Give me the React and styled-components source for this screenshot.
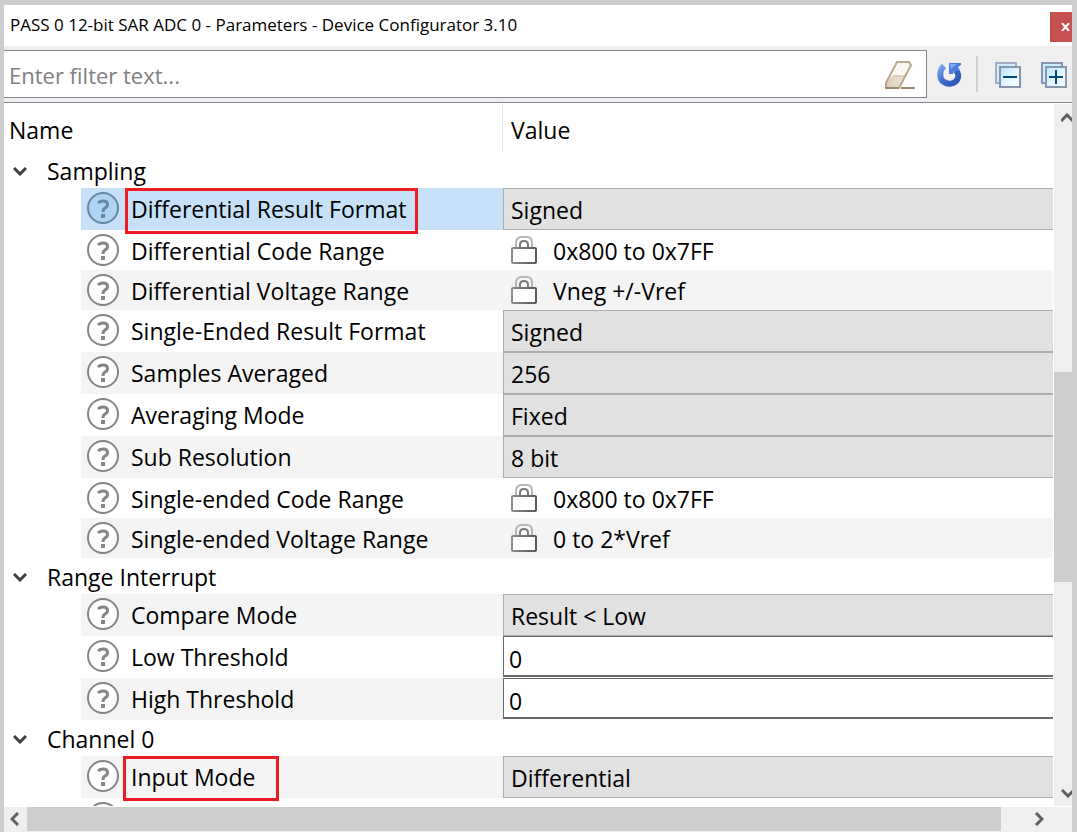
import React, { useState } from "react";
import styled, { createGlobalStyle, css } from "styled-components";

const GlobalStyle = createGlobalStyle`
  * { box-sizing: border-box; }
  body {
    margin: 0;
    background: #cdcdcd;
    color: #000;
    font-family: "Open Sans", "Noto Sans", sans-serif;
  }
  button, input, select { font: inherit; color: inherit; margin: 0; border-radius: 0; }
`;

const Window = styled.main`
  display: flex;
  flex-direction: column;
  height: 100vh;
  min-height: 400px;
  border: solid #cdcdcd;
  border-width: 5px 5px 0 4px;
  background: #fff;
  overflow: hidden;
`;

const TitleBar = styled.header`
  display: flex;
  align-items: flex-start;
  justify-content: space-between;
  flex: none;
  height: 41px;
  padding: 7px 0 0 6px;
`;

const Title = styled.h1`
  margin: 0;
  font-size: 17px;
  line-height: 26px;
  font-weight: 400;
  white-space: nowrap;
`;

const CloseButton = styled.button`
  display: flex;
  align-items: center;
  justify-content: flex-end;
  width: 22px;
  height: 30px;
  padding: 0 2px 0 0;
  border: 0;
  background: #c75050;
`;

const Toolbar = styled.div`
  display: flex;
  align-items: center;
  flex: none;
  height: 57px;
  padding-right: 5px;
  background: #efefef;
  border-bottom: 1px solid #828790;
`;

const FilterBox = styled.div`
  display: flex;
  align-items: center;
  flex: 1;
  min-width: 0;
  height: 48px;
  padding: 2px 11px 0 0;
  background: #fff;
  border: 1px solid #828790;
  border-left: 0;
`;

const FilterInput = styled.input`
  flex: 1;
  min-width: 0;
  height: 44px;
  padding: 0 5px;
  border: 0;
  outline: 0;
  background: transparent;
  font-size: 22px;
  &::placeholder { color: #808080; opacity: 1; }
`;

const IconButton = styled.button`
  display: flex;
  flex: none;
  padding: 0;
  border: 0;
  background: transparent;
`;

const ToolGroup = styled.div`
  display: flex;
  align-items: center;
  gap: 20px;
  padding: 2px 0 0 ${(p) => p.$inset}px;
`;

const Separator = styled.span`
  flex: none;
  width: 2px;
  height: 36px;
  margin-left: 14px;
  background: #d0d0d0;
`;

const Body = styled.div`
  display: flex;
  flex: 1;
  min-height: 0;
`;

const TableArea = styled.div`
  flex: 1;
  min-width: 0;
  margin-right: 1px;
  overflow: hidden;
`;

const Table = styled.table`
  width: 100%;
  table-layout: fixed;
  border-collapse: collapse;
  font-size: 23px;
  line-height: 32px;
  white-space: nowrap;
`;

const NameColumn = styled.col`
  width: 499px;
`;

const HeadCell = styled.th`
  height: 49px;
  padding: 4px 5px 0;
  font-weight: 400;
  text-align: left;
  ${(p) => p.$divided && css`
    padding-left: 8px;
    box-shadow: -1px 0 #e5e5e5;
  `}
`;

const SectionCell = styled.th`
  height: 36px;
  padding: 0;
  font-weight: 400;
  text-align: left;
`;

const SectionButton = styled.button`
  display: flex;
  align-items: center;
  gap: 20px;
  width: 100%;
  height: 36px;
  padding: 2px 0 0 9px;
  border: 0;
  background: transparent;
  text-align: left;
`;

const NameCell = styled.th`
  height: ${(p) => p.$height}px;
  padding: 0 0 0 77px;
  font-weight: 400;
  text-align: left;
  vertical-align: top;
`;

const NameContent = styled.div`
  display: flex;
  gap: 11px;
  height: ${(p) => p.$height}px;
  padding: 4px 0 0 5px;
  background: ${(p) => (p.$selected ? "#c5e0f7" : p.$shaded ? "#f4f4f4" : "#fff")};
`;

const Label = styled.label`
  position: relative;
  height: 36px;
  padding-top: 1px;
`;

const Highlight = styled.span`
  position: absolute;
  inset: ${(p) => p.$inset};
  border: 3px solid #ed1c24;
  pointer-events: none;
`;

const ValueCell = styled.td`
  height: ${(p) => p.$height}px;
  padding: 0;
  vertical-align: top;
  background: ${(p) => (p.$shaded ? "#f4f4f4" : "#fff")};
`;

const Select = styled.select`
  display: block;
  appearance: none;
  width: 100%;
  height: 42px;
  padding: 2px 8px 0 7px;
  border: 1px solid #acacac;
  border-right: 0;
  background: #e1e1e1;
  outline: 0;
`;

const NumberInput = styled.input`
  display: block;
  width: 100%;
  height: 41px;
  padding: 6px 5px 0;
  border: solid #696969;
  border-width: 1px 0 2px 1px;
  background: #fff;
  outline: 0;
`;

const Locked = styled.output`
  display: flex;
  gap: 14px;
  height: 40px;
  padding: 5px 8px 0;
`;

const VerticalScroll = styled.div`
  display: flex;
  flex-direction: column;
  flex: none;
  width: 18px;
  margin-top: 1px;
  background: #efefef;
`;

const HorizontalScroll = styled.div`
  display: flex;
  flex: none;
  height: 26px;
  border-top: 1px solid #fff;
  border-bottom: 1px solid #efefef;
  background: #efefef;
`;

const ScrollButton = styled.button`
  display: flex;
  flex: none;
  align-items: center;
  justify-content: ${(p) => (p.$clipped ? "flex-end" : "center")};
  width: ${(p) => (p.$clipped ? 18 : 23)}px;
  height: ${(p) => (p.$clipped ? 26 : 24)}px;
  padding: 0;
  border: 0;
  background: transparent;
`;

const Track = styled.div`
  display: flex;
  flex: 1;
  flex-direction: ${(p) => (p.$vertical ? "column" : "row")};
`;

const TrackSpace = styled.span`
  flex: ${(p) => p.$share};
`;

const Thumb = styled.span`
  flex: ${(p) => p.$share};
  background: #cdcdcd;
`;

const Corner = styled.span`
  flex: none;
  width: 22px;
`;

const CHEVRONS = {
  down: "M1 1 L7 7 L13 1",
  up: "M0 8 L6 2 L12 8",
  left: "M8 1 L2 7 L8 13",
  right: "M3 1 L9 7 L3 13",
};

function Chevron({ dir, width = 14, height = 9, color = "#606060" }) {
  return (
    <svg width={width} height={height} aria-hidden="true">
      <path d={CHEVRONS[dir]} fill="none" stroke={color} strokeWidth="3" />
    </svg>
  );
}

function HelpIcon({ selected }) {
  const ink = selected ? "#6388a8" : "#858585";
  return (
    <svg width="34" height="34" viewBox="0 0 34 34" aria-hidden="true">
      <circle cx="17" cy="16" r="15" fill={selected ? "#aed3f3" : "#fff"} stroke={ink} strokeWidth="2" />
      <path d="M12 11 Q14 9 17 9 Q21.500 9 21.500 12.500 Q21.500 15 19 16 Q17 17 17 20" fill="none" stroke={ink} strokeWidth="3" />
      <rect x="15" y="22" width="4" height="4" fill={ink} />
    </svg>
  );
}

function LockIcon() {
  return (
    <svg width="28" height="30" viewBox="0 0 28 30" aria-hidden="true">
      <defs>
        <linearGradient id="lockBody" x1="0" x2="1">
          <stop offset="0" stopColor="#8c8c8c" />
          <stop offset="1" stopColor="#5a5a5a" />
        </linearGradient>
      </defs>
      <path d="M5 12 V8 Q5 2 11 2 H16 Q21 2 21 8 V12" fill="none" stroke="#b8b8b8" strokeWidth="2" />
      <path d="M9 12 V10 Q9 6 13 6 Q17 6 17 10 V12" fill="none" stroke="#7c7c7c" strokeWidth="2" />
      <rect x="1" y="13" width="24" height="15" rx="1" fill="#fff" stroke="url(#lockBody)" strokeWidth="2" />
    </svg>
  );
}

function EraserIcon() {
  return (
    <svg width="31" height="30" viewBox="0 0 31 30" aria-hidden="true">
      <defs>
        <linearGradient id="eraserTip" x1="0" x2="1">
          <stop offset="0" stopColor="#dccbbb" />
          <stop offset="1" stopColor="#eee3d9" />
        </linearGradient>
      </defs>
      <path d="M13 2 L25 2 L27 5 L21 16 L10 15 Z" fill="#faf7f4" />
      <path d="M9 15 L21 16 L15 27 L2 27 L2 23 Z" fill="url(#eraserTip)" />
      <path d="M13 2 H25 L27 5 L15 28 H2 V23 Z" fill="none" stroke="#b7a78c" strokeWidth="2" />
      <path d="M10 16 H20" stroke="#cdbb9f" strokeWidth="1" />
      <path d="M1 28 H15 M17 28 H31" stroke="#98896e" strokeWidth="2" />
    </svg>
  );
}

function ResetIcon() {
  return (
    <svg width="25" height="26" viewBox="0 0 25 26" aria-hidden="true">
      <defs>
        <linearGradient id="resetRing" x1="0" y1="0" x2="1" y2="1">
          <stop offset="0" stopColor="#7aa3ea" />
          <stop offset="0.500" stopColor="#3e6cce" />
          <stop offset="1" stopColor="#2b55b2" />
        </linearGradient>
      </defs>
      <path d="M7 4 C2 8 2 17 7 20 C11 23 17 22 20 18 C22 15 21.500 11 19 8" fill="none" stroke="url(#resetRing)" strokeWidth="6" />
      <path d="M12 1 H24 V3 L21 5 L23 9 L17 9 L16 12 H12 Z" fill="#4c7de0" />
      <path d="M13 2 H20 L14 7 Z" fill="#82aaf5" />
    </svg>
  );
}

function StackIcon({ plus }) {
  return (
    <svg width="26" height="26" viewBox="0 0 26 26" aria-hidden="true">
      <defs>
        <linearGradient id="stackPane" x1="0" y1="0" x2="1" y2="1">
          <stop offset="0" stopColor="#b9e5ff" />
          <stop offset="0.600" stopColor="#e9f8ff" />
          <stop offset="1" stopColor="#fff" />
        </linearGradient>
      </defs>
      <rect x="1" y="1" width="20" height="20" fill="#cceeff" stroke={plus ? "#8795ad" : "#a3aec5"} strokeWidth="2" />
      <rect x="5" y="5" width="20" height="20" fill="url(#stackPane)" stroke="#8795ad" strokeWidth="2" />
      <path d={plus ? "M8 15 H22 M15 8 V22" : "M8 15 H22"} stroke="#004a80" strokeWidth="2" />
    </svg>
  );
}

const SECTIONS = [
  {
    name: "Sampling",
    rows: [
      { name: "Differential Result Format", kind: "select", value: "Signed", selected: true, highlight: "-4px -12px -6px -6px" },
      { name: "Differential Code Range", kind: "locked", value: "0x800 to 0x7FF" },
      { name: "Differential Voltage Range", kind: "locked", value: "Vneg +/-Vref" },
      { name: "Single-Ended Result Format", kind: "select", value: "Signed" },
      { name: "Samples Averaged", kind: "select", value: "256" },
      { name: "Averaging Mode", kind: "select", value: "Fixed" },
      { name: "Sub Resolution", kind: "select", value: "8 bit" },
      { name: "Single-ended Code Range", kind: "locked", value: "0x800 to 0x7FF" },
      { name: "Single-ended Voltage Range", kind: "locked", value: "0 to 2*Vref" },
    ],
  },
  {
    name: "Range Interrupt",
    rows: [
      { name: "Compare Mode", kind: "select", value: "Result < Low" },
      { name: "Low Threshold", kind: "number", value: "0" },
      { name: "High Threshold", kind: "number", value: "0" },
    ],
  },
  {
    name: "Channel 0",
    rows: [
      { name: "Input Mode", kind: "select", value: "Differential", highlight: "-4px -24px -5px -8px" },
      { name: "", kind: "empty" },
    ],
  },
];

const SHADED = new Set([
  "Differential Voltage Range",
  "Samples Averaged",
  "Sub Resolution",
  "Single-ended Voltage Range",
  "Compare Mode",
  "High Threshold",
  "Input Mode",
]);

function ValueEditor({ id, kind, value }) {
  if (kind === "select") {
    return (
      <Select id={id} defaultValue={value}>
        <option>{value}</option>
      </Select>
    );
  }
  if (kind === "number") return <NumberInput id={id} type="text" inputMode="numeric" defaultValue={value} />;
  if (kind === "locked") return <Locked id={id}><LockIcon />{value}</Locked>;
  return null;
}

function ParameterRow({ row }) {
  const id = "param-" + row.name.toLowerCase().replace(/[^a-z]+/g, "-");
  const height = row.kind === "locked" ? 40 : 42;
  const shaded = SHADED.has(row.name);
  return (
    <tr>
      <NameCell scope="row" $height={height}>
        <NameContent $height={height} $selected={row.selected} $shaded={shaded}>
          <HelpIcon selected={row.selected} />
          {row.name && (
            <Label htmlFor={id}>
              {row.name}
              {row.highlight && <Highlight $inset={row.highlight} />}
            </Label>
          )}
        </NameContent>
      </NameCell>
      <ValueCell $height={height} $shaded={shaded && row.kind === "locked"}>
        <ValueEditor id={id} kind={row.kind} value={row.value} />
      </ValueCell>
    </tr>
  );
}

function Section({ section }) {
  const [open, setOpen] = useState(true);
  return (
    <tbody>
      <tr>
        <SectionCell colSpan={2} scope="rowgroup">
          <SectionButton type="button" aria-expanded={open} onClick={() => setOpen(!open)}>
            <Chevron dir="down" color="#404040" />
            {section.name}
          </SectionButton>
        </SectionCell>
      </tr>
      {open && section.rows.map((row) => <ParameterRow key={row.name} row={row} />)}
    </tbody>
  );
}

export default function App() {
  return (
    <>
      <GlobalStyle />
      <Window>
        <TitleBar>
          <Title>PASS 0 12-bit SAR ADC 0 - Parameters - Device Configurator 3.10</Title>
          <CloseButton type="button" aria-label="Close">
            <svg width="9" height="8" viewBox="0 0 9 8" aria-hidden="true">
              <path d="M1 0 L8 8 M8 0 L1 8" stroke="#fff" strokeWidth="2" />
            </svg>
          </CloseButton>
        </TitleBar>
        <Toolbar>
          <FilterBox>
            <FilterInput type="text" aria-label="Filter" placeholder="Enter filter text..." />
            <IconButton type="button" aria-label="Clear filter"><EraserIcon /></IconButton>
          </FilterBox>
          <ToolGroup $inset={10}>
            <IconButton type="button" aria-label="Reset"><ResetIcon /></IconButton>
          </ToolGroup>
          <Separator />
          <ToolGroup $inset={17}>
            <IconButton type="button" aria-label="Collapse all"><StackIcon /></IconButton>
            <IconButton type="button" aria-label="Expand all"><StackIcon plus /></IconButton>
          </ToolGroup>
        </Toolbar>
        <Body>
          <TableArea>
            <Table>
              <colgroup>
                <NameColumn />
                <col />
              </colgroup>
              <thead>
                <tr>
                  <HeadCell scope="col">Name</HeadCell>
                  <HeadCell scope="col" $divided>Value</HeadCell>
                </tr>
              </thead>
              {SECTIONS.map((section) => <Section key={section.name} section={section} />)}
            </Table>
          </TableArea>
          <VerticalScroll>
            <ScrollButton type="button" aria-label="Scroll up" $clipped><Chevron dir="up" width={11} /></ScrollButton>
            <Track $vertical>
              <TrackSpace $share={242} />
              <Thumb $share={210} />
              <TrackSpace $share={198} />
            </Track>
            <ScrollButton type="button" aria-label="Scroll down" $clipped><Chevron dir="down" width={11} /></ScrollButton>
          </VerticalScroll>
        </Body>
        <HorizontalScroll>
          <ScrollButton type="button" aria-label="Scroll left"><Chevron dir="left" width={11} height={14} /></ScrollButton>
          <Track>
            <Thumb $share={974} />
            <TrackSpace $share={26} />
          </Track>
          <ScrollButton type="button" aria-label="Scroll right"><Chevron dir="right" width={11} height={14} /></ScrollButton>
          <Corner />
        </HorizontalScroll>
      </Window>
    </>
  );
}
